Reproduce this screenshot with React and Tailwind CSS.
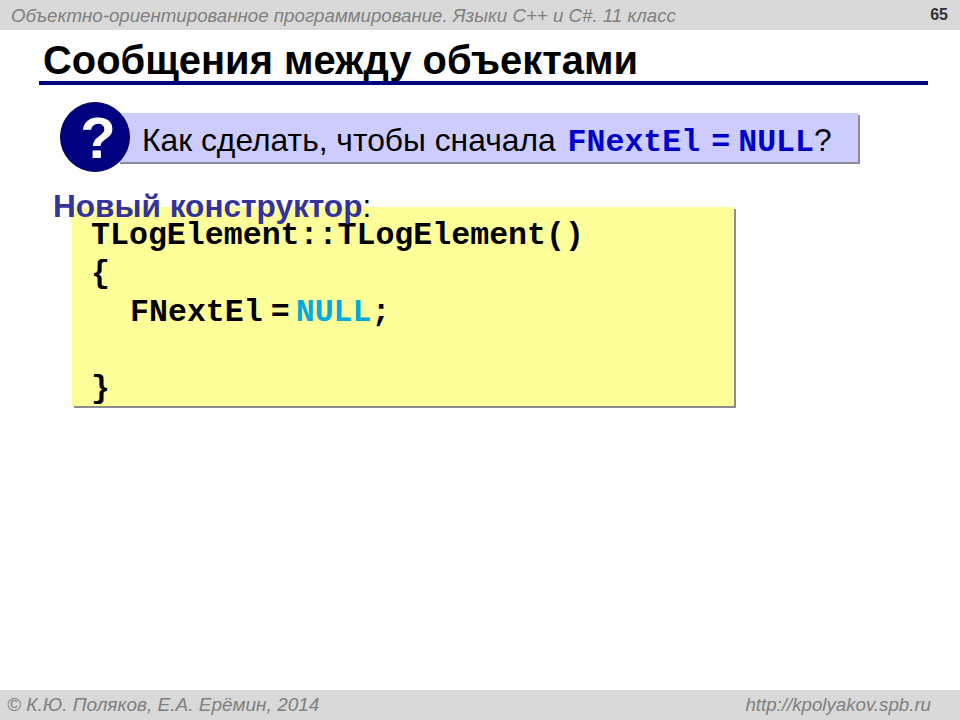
const sans = "font-['Liberation_Sans',Arial,sans-serif]";
const mono = "font-['Liberation_Mono','Courier_New',monospace]";

const Question = () => (
  <div className="flex items-center h-[70px] ml-[60px] w-[802px]">
    <div className="relative z-10 flex items-center justify-center w-[70px] h-[70px] pl-[6px] pt-[2px] rounded-full bg-[#000080] border border-[#00004d] shrink-0">
      <span className="text-white font-bold text-[58px] leading-none">?</span>
    </div>
    {/* Blue strip slides under the circle */}
    <div className="flex items-baseline h-[49px] w-[740px] -ml-[12px] pl-[24px] pt-[9px] bg-[#ccccff] shadow-[2px_2px_0_#8c8c9c] text-[31.8px] leading-[36px] text-black whitespace-pre">
      <span>Как сделать, чтобы сначала </span>
      <span className={`${mono} font-bold text-[#0000cc] text-[31.6px] ml-[3px]`}>FNextEl</span>
      <span className={`${mono} font-bold text-[#0000cc] text-[31.6px] ml-[11px]`}>=</span>
      <span className={`${mono} font-bold text-[#0000cc] text-[31.6px] ml-[8px]`}>NULL</span>
      <span>?</span>
    </div>
  </div>
);

const App = () => {
  return (
    <div className={`${sans} relative flex flex-col w-[960px] h-[720px] bg-white overflow-hidden`}>
      <div className="flex justify-between items-center h-[30px] pl-[11px] pr-[12px] bg-[#d9d9d9] shrink-0">
        <span className="italic text-[#808080] text-[18.7px] pt-[2px]">Объектно-ориентированное программирование. Языки С++ и С#. 11 класс</span>
        <span className="font-bold text-[#333333] text-[16px]">65</span>
      </div>

      <h1 className="mt-[9px] ml-[43px] font-bold text-black text-[39.9px] leading-[42px]">Сообщения между объектами</h1>
      <div className="ml-[39px] w-[889px] h-[4px] bg-[#000080]" />

      <div className="mt-[17px]">
        <Question />
      </div>

      <div className="relative z-10 mt-[13px] ml-[53px] h-[42px] text-[31.6px] leading-[42px] font-bold text-[#333399]">
        Новый конструктор<span className="font-normal text-black">:</span>
      </div>

      <div className={`${mono} -mt-[20px] ml-[72px] w-[662px] h-[199px] pt-[10px] pl-[19px] bg-[#ffff99] shadow-[2px_2px_0_#8c8c8c] font-bold text-black text-[31.6px] leading-[38.3px]`}>
        <div>TLogElement::TLogElement()</div>
        <div>{"{"}</div>
        <div className="flex pl-[39px]">
          <span>FNextEl</span>
          <span className="ml-[8px]">=</span>
          <span className="text-[#00aadd] ml-[6px]">NULL</span>
          <span>;</span>
        </div>
        <div>&nbsp;</div>
        <div>{"}"}</div>
      </div>

      <div className="flex justify-between items-center h-[30px] mt-auto pl-[7px] pr-[29px] bg-[#d9d9d9] italic text-[#808080] text-[18.7px]">
        <span className="text-[19px]">© К.Ю. Поляков, Е.А. Ерёмин, 2014</span>
        <span>http://kpolyakov.spb.ru</span>
      </div>
    </div>
  );
};

export default App;
